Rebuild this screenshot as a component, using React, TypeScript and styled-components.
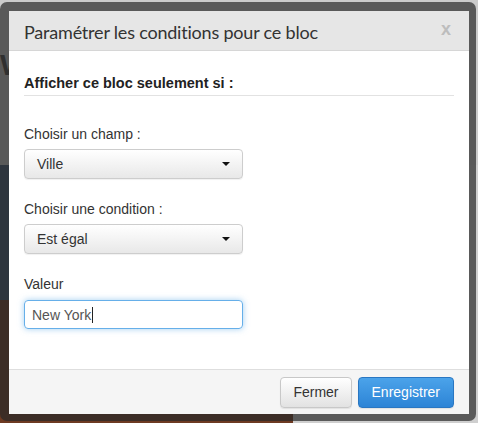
import React from "react";
import styled, { createGlobalStyle } from "styled-components";

const GlobalStyle = createGlobalStyle`
  html, body {
    margin: 0;
    padding: 0;
    background: #c8c8c8;
    font-family: "Liberation Sans", Arial, sans-serif;
  }
`;

const Page = styled.div`
  position: relative;
  width: 478px;
  height: 423px;
  overflow: hidden;
  display: flex;
  flex-direction: column;
`;

const PageTop = styled.div`
  height: 165px;
  background: #cbcbcb;
  padding: 48px 0 0 0;
  box-sizing: border-box;
  font: bold 30px "Liberation Sans", Arial, sans-serif;
  color: #444;
`;

const PageBand = styled.div<{ $tone: string; $h: number }>`
  height: ${(p) => p.$h}px;
  display: flex;
  background: ${(p) => p.$tone};
`;

const PageSide = styled.div`
  margin-left: auto;
  width: 185px;
  background: #cfcfcf;
`;

const Frame = styled.div`
  position: absolute;
  top: 2px;
  left: 0;
  width: 476px;
  height: 419px;
  box-sizing: border-box;
  padding: 9px 7px 7px 9px;
  border-radius: 7px;
  background: rgba(40, 40, 40, 0.7);
`;

const Modal = styled.div`
  width: 460px;
  height: 403px;
  background: #fff;
  display: flex;
  flex-direction: column;
`;

const Header = styled.div`
  height: 40px;
  box-sizing: border-box;
  padding: 0 15px;
  display: flex;
  align-items: center;
  background: #e6e6e6;
  border-bottom: 1px solid #d6d6d6;
`;

const Title = styled.h4`
  margin: 2px 0 0;
  font: 18px Lato, "Open Sans", sans-serif;
  letter-spacing: -0.2px;
  color: #333;
  flex: 1;
`;

const Close = styled.span`
  font: bold 18px "Liberation Sans", Arial, sans-serif;
  color: #bdbdbd;
  margin-top: -2px;
  margin-right: 3px;
`;

const Body = styled.div`
  padding: 23px 15px 0;
  display: flex;
  flex-direction: column;
`;

const Legend = styled.div`
  font-weight: bold;
  font-size: 14.5px;
  line-height: 18px;
  color: #222;
  padding-bottom: 3px;
  border-bottom: 1px solid #e2e2e2;
  margin-bottom: 8px;
`;

const Label = styled.div`
  font-size: 14px;
  line-height: 20px;
  color: #333;
  margin-top: 20px;
  margin-bottom: 5px;
`;

const Select = styled.div`
  width: 219px;
  height: 30px;
  box-sizing: border-box;
  padding: 0 12px;
  display: flex;
  align-items: center;
  font-size: 14px;
  color: #333;
  border: 1px solid #cdcdcd;
  border-radius: 4px;
  background: linear-gradient(#ffffff, #e8e8e8);
  box-shadow: 0 1px 1px rgba(0, 0, 0, 0.06);
`;

const Caret = styled.span`
  margin-left: auto;
  width: 0;
  height: 0;
  border-left: 4px solid transparent;
  border-right: 4px solid transparent;
  border-top: 4px solid #111;
`;

const Input = styled.div`
  width: 219px;
  height: 29px;
  margin-top: 1px;
  box-sizing: border-box;
  padding: 0 7px;
  display: flex;
  align-items: center;
  font-size: 14px;
  color: #555;
  border: 1px solid #66afe9;
  border-radius: 4px;
  box-shadow: 0 0 6px rgba(102, 175, 233, 0.6);
`;

const TextCaret = styled.span`
  width: 1px;
  height: 16px;
  background: #222;
  margin-left: 1px;
`;

const Footer = styled.div`
  margin-top: auto;
  height: 45px;
  box-sizing: border-box;
  padding: 0 15px;
  display: flex;
  justify-content: flex-end;
  align-items: center;
  gap: 6px;
  background: #f5f5f5;
  border-top: 1px solid #dedede;
`;

const Button = styled.button<{ $primary?: boolean }>`
  height: 31px;
  box-sizing: border-box;
  padding: 0 ${(p) => (p.$primary ? 13 : 12)}px;
  font: 14px "Liberation Sans", Arial, sans-serif;
  border-radius: 4px;
  border: 1px solid ${(p) => (p.$primary ? "#2a77c2" : "#c8c8c8")};
  color: ${(p) => (p.$primary ? "#fff" : "#333")};
  background: ${(p) =>
    p.$primary
      ? "linear-gradient(#4ba3ea, #2d84d6)"
      : "linear-gradient(#ffffff, #e2e2e2)"};
  box-shadow: 0 1px 1px rgba(0, 0, 0, 0.08);
`;

export default function App() {
  return (
    <Page>
      <GlobalStyle />
      <PageTop>W</PageTop>
      <PageBand $tone="#3d5473" $h={135}>
        <PageSide />
      </PageBand>
      <PageBand $tone="#6d3a22" $h={123}>
        <PageSide />
      </PageBand>
      <Frame>
        <Modal>
          <Header>
            <Title>Paramétrer les conditions pour ce bloc</Title>
            <Close>x</Close>
          </Header>
          <Body>
            <Legend>Afficher ce bloc seulement si :</Legend>
            <Label>Choisir un champ :</Label>
            <Select>
              Ville
              <Caret />
            </Select>
            <Label>Choisir une condition :</Label>
            <Select>
              Est égal
              <Caret />
            </Select>
            <Label>Valeur</Label>
            <Input>
              New York
              <TextCaret />
            </Input>
          </Body>
          <Footer>
            <Button>Fermer</Button>
            <Button $primary>Enregistrer</Button>
          </Footer>
        </Modal>
      </Frame>
    </Page>
  );
}
